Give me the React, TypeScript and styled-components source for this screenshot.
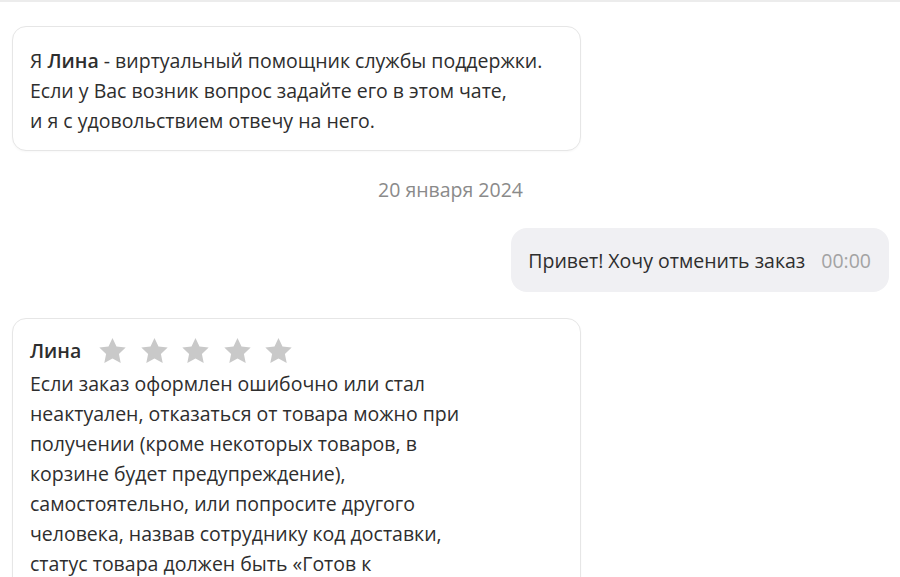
import React from "react";
import styled, { createGlobalStyle } from "styled-components";

const Global = createGlobalStyle`
  html, body { margin: 0; padding: 0; background: #ffffff; }
  body { font-family: "Open Sans", "Noto Sans", "DejaVu Sans", sans-serif; color: #2e2e2e; }
  * { box-sizing: border-box; }
`;

const Page = styled.div`
  width: 900px;
  height: 577px;
  overflow: hidden;
  border-top: 2px solid #ececec;
  display: flex;
  flex-direction: column;
  padding: 24px 11px 0 12px;
  & > * { flex-shrink: 0; }
`;

const BotBubble = styled.div<{ $compact?: boolean }>`
  align-self: flex-start;
  width: 569px;
  border: 1px solid #e6e6e6;
  border-radius: 14px;
  background: #fff;
  padding: ${(p) => (p.$compact ? "14px 17px 14px" : "19px 17px 14px")};
  font-size: 19.5px;
  line-height: 30px;
  box-shadow: 0 1px 2px rgba(0, 0, 0, 0.03);
`;

const Line = styled.span`
  display: block;
  white-space: nowrap;
`;

const DateLabel = styled.div`
  align-self: center;
  margin-top: 24px;
  font-size: 19.5px;
  line-height: 30px;
  color: #8a8a8a;
`;

const UserBubble = styled.div`
  align-self: flex-end;
  margin-top: 23px;
  height: 64px;
  background: #f0f0f3;
  border-radius: 16px;
  padding: 0 18px 0 17px;
  display: flex;
  align-items: center;
  gap: 16px;
  font-size: 19.5px;
`;

const Time = styled.span`
  color: #a3a3a3;
`;

const Header = styled.div`
  display: flex;
  align-items: center;
  gap: 17px;
  height: 36px;
`;

const Name = styled.span`
  font-weight: 600;
`;

const Stars = styled.div`
  display: flex;
  gap: 12.5px;
`;

const BotBubble2 = styled(BotBubble)`
  margin-top: 26px;
`;

const Star = () => (
  <svg width="29" height="28" viewBox="0 0 24 23">
    <path
      d="M12 0.8l3.3 7 7.6.9-5.6 5.2 1.5 7.6L12 17.7l-6.8 3.8 1.5-7.6L1.1 8.7l7.6-.9z"
      fill="#c9c9c9"
    />
  </svg>
);

export default function App() {
  return (
    <>
      <Global />
      <Page>
        <BotBubble>
          <Line>
            Я <Name>Лина</Name> - виртуальный помощник службы поддержки.
          </Line>
          <Line>Если у Вас возник вопрос задайте его в этом чате,</Line>
          <Line>и я с удовольствием отвечу на него.</Line>
        </BotBubble>
        <DateLabel>20 января 2024</DateLabel>
        <UserBubble>
          <span>Привет! Хочу отменить заказ</span>
          <Time>00:00</Time>
        </UserBubble>
        <BotBubble2 $compact>
          <Header>
            <Name>Лина</Name>
            <Stars>
              {[0, 1, 2, 3, 4].map((i) => (
                <Star key={i} />
              ))}
            </Stars>
          </Header>
          <Line>Если заказ оформлен ошибочно или стал</Line>
          <Line>неактуален, отказаться от товара можно при</Line>
          <Line>получении (кроме некоторых товаров, в</Line>
          <Line>корзине будет предупреждение),</Line>
          <Line>самостоятельно, или попросите другого</Line>
          <Line>человека, назвав сотруднику код доставки,</Line>
          <Line>статус товара должен быть «Готов к</Line>
          <Line>получению».</Line>
        </BotBubble2>
      </Page>
    </>
  );
}
